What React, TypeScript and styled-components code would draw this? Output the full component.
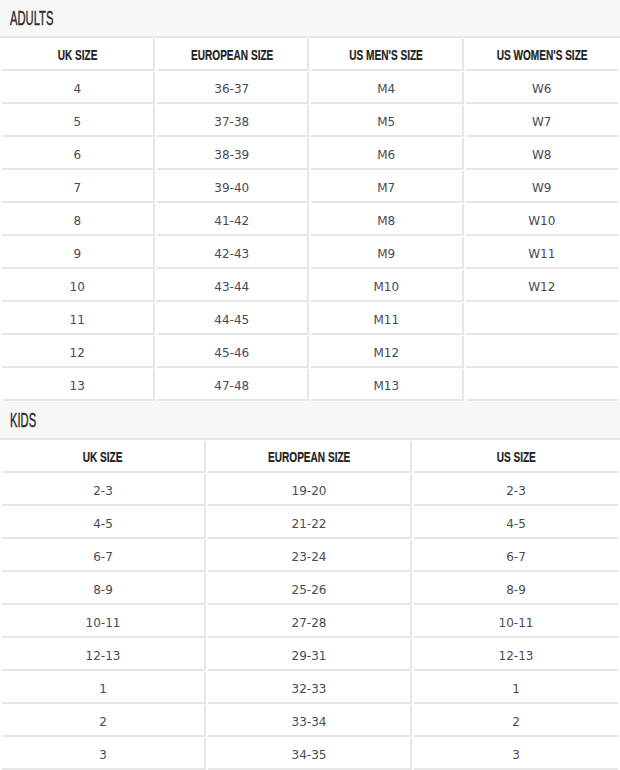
import React from "react";
import styled, { createGlobalStyle } from "styled-components";

const GlobalStyle = createGlobalStyle`
  html, body {
    margin: 0;
    padding: 0;
    background: #fff;
  }
  body {
    width: 620px;
    font-family: "DejaVu Sans", Verdana, sans-serif;
  }
`;

const Section = styled.section`
  width: 620px;
`;

const TitleBar = styled.div`
  box-sizing: border-box;
  height: 38px;
  padding-left: 10px;
  display: flex;
  align-items: center;
  background: #f7f7f7;
  border-bottom: 2px solid #e6e6e6;
`;

// condensed display face is not installed, so squeeze Liberation Sans
const Title = styled.h2`
  margin: 0;
  display: inline-block;
  font-family: "Liberation Sans", Arial, sans-serif;
  font-weight: normal;
  font-size: 20px;
  color: #2a2a2a;
  -webkit-text-stroke: 0.4px #2a2a2a;
  transform: scaleX(0.56);
  transform-origin: left center;
`;

const Table = styled.table`
  width: 100%;
  table-layout: fixed;
  border-collapse: separate;
  border-spacing: 2px 1px;
`;

const HeadCell = styled.th`
  box-sizing: border-box;
  height: 32px;
  padding: 1px 0 0;
  text-align: center;
  border-bottom: 2px solid #e6e6e6;
  border-right: 2px solid #e6e6e6;

  &:last-child {
    border-right: none;
  }
`;

const HeadLabel = styled.span`
  display: inline-block;
  font-family: "Liberation Sans", Arial, sans-serif;
  font-weight: bold;
  font-size: 14px;
  color: #222;
  white-space: nowrap;
  -webkit-text-stroke: 0.2px #222;
  transform: scaleX(0.72);
`;

const Cell = styled.td`
  box-sizing: border-box;
  height: 32px;
  padding: 4px 0 0;
  font-size: 12px;
  color: #4a4a52;
  text-align: center;
  border-bottom: 2px solid #e6e6e6;
  border-right: 2px solid #e6e6e6;

  &:last-child {
    border-right: none;
  }
`;

interface SizeTableProps {
  title: string;
  columns: string[];
  rows: string[][];
}

const SizeTable = ({ title, columns, rows }: SizeTableProps) => (
  <Section>
    <TitleBar>
      <Title>{title}</Title>
    </TitleBar>
    <Table>
      <thead>
        <tr>
          {columns.map((c) => (
            <HeadCell key={c}>
              <HeadLabel>{c}</HeadLabel>
            </HeadCell>
          ))}
        </tr>
      </thead>
      <tbody>
        {rows.map((row, i) => (
          <tr key={i}>
            {row.map((v, j) => (
              <Cell key={j}>{v}</Cell>
            ))}
          </tr>
        ))}
      </tbody>
    </Table>
  </Section>
);

const womens = ["W6", "W7", "W8", "W9", "W10", "W11", "W12"];

const adultRows = [4, 5, 6, 7, 8, 9, 10, 11, 12, 13].map((uk, i) => {
  const euro = ["36-37", "37-38", "38-39", "39-40", "41-42", "42-43", "43-44", "44-45", "45-46", "47-48"][i];
  return [String(uk), euro, `M${uk}`, womens[i] ?? ""];
});

const kidsRows = [
  ["2-3", "19-20", "2-3"],
  ["4-5", "21-22", "4-5"],
  ["6-7", "23-24", "6-7"],
  ["8-9", "25-26", "8-9"],
  ["10-11", "27-28", "10-11"],
  ["12-13", "29-31", "12-13"],
  ["1", "32-33", "1"],
  ["2", "33-34", "2"],
  ["3", "34-35", "3"],
];

export default function App() {
  return (
    <>
      <GlobalStyle />
      <SizeTable
        title="ADULTS"
        columns={["UK SIZE", "EUROPEAN SIZE", "US MEN'S SIZE", "US WOMEN'S SIZE"]}
        rows={adultRows}
      />
      <SizeTable
        title="KIDS"
        columns={["UK SIZE", "EUROPEAN SIZE", "US SIZE"]}
        rows={kidsRows}
      />
    </>
  );
}
